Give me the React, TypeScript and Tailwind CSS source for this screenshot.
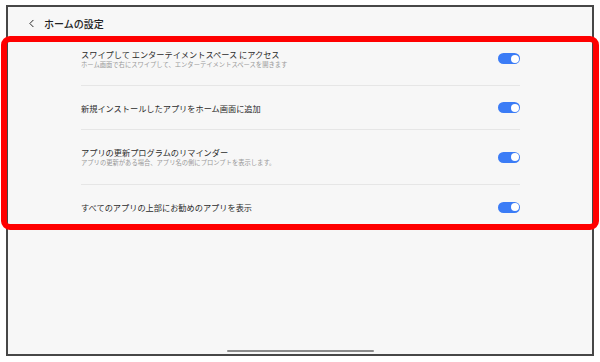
import { ChevronLeft } from "lucide-react";

const rows = [
  {
    title: "スワイプして エンターテイメントスペース にアクセス",
    sub: "ホーム画面で右にスワイプして、エンターテイメントスペースを開きます",
    h: "h-[46px] pb-2",
  },
  { title: "新規インストールしたアプリをホーム画面に追加", h: "h-[44px]" },
  {
    title: "アプリの更新プログラムのリマインダー",
    sub: "アプリの更新がある場合、アプリ名の側にプロンプトを表示します。",
    h: "h-[55px]",
  },
  { title: "すべてのアプリの上部にお勧めのアプリを表示", h: "h-[44px]" },
];

function Toggle() {
  return (
    <div className="w-[22px] h-[11px] rounded-full bg-[#3b7cf6] flex items-center justify-end pr-[1.5px] shrink-0">
      <div className="w-[8px] h-[8px] rounded-full bg-white" />
    </div>
  );
}

export default function App() {
  return (
    <div
      className="w-[600px] h-[362px] bg-white pt-[5px] px-[6px] overflow-hidden"
      style={{ fontFamily: '"Noto Sans CJK JP", "Noto Sans", sans-serif' }}
    >
      <div className="w-[588px] h-[351px] border-2 border-[#474747] bg-[#f7f7f7] flex flex-col">
        <div className="h-[33px] flex items-center pl-[17px] gap-[6px] text-[#222] shrink-0">
          <ChevronLeft size={13} strokeWidth={1.8} />
          <span className="text-[10px] font-medium">ホームの設定</span>
        </div>

        <div className="relative">
          {rows.map((r, i) => (
            <div key={i} className="pl-[73px] pr-[72px]">
              <div
                className={`${r.h} flex items-center justify-between ${
                  i < rows.length - 1 ? "border-b border-[#e6e6e6]" : ""
                }`}
              >
                <div className="flex flex-col">
                  <span className="text-[8.2px] leading-[12px] text-[#2b2b2b]">{r.title}</span>
                  {r.sub && (
                    <span className="text-[6.3px] leading-[10px] text-[#999]">{r.sub}</span>
                  )}
                </div>
                <Toggle />
              </div>
            </div>
          ))}
          <div className="absolute -left-[7px] -right-[7px] -top-[4px] -bottom-[1px] border-[6px] border-[#ff0000] rounded-[9px] pointer-events-none" />
        </div>

        <div className="flex-1 flex items-end justify-center pb-[2px]">
          <div className="w-[147px] h-[2px] bg-[#8a8a8a] rounded-full" />
        </div>
      </div>
    </div>
  );
}
